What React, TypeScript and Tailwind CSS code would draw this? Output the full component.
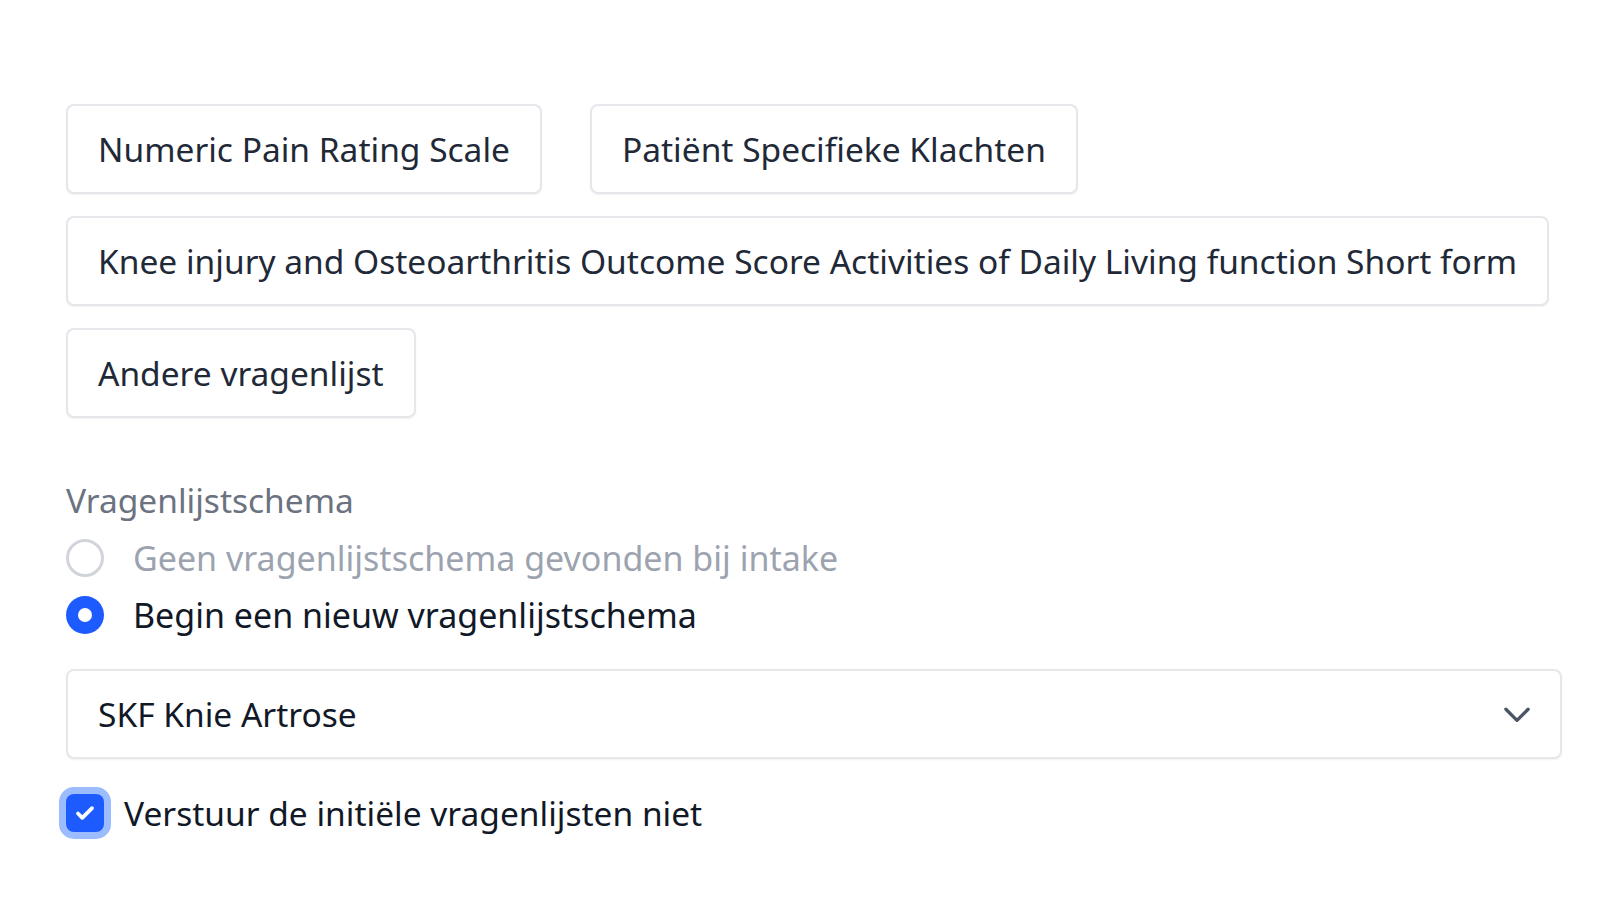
import React from "react";

function Chip({ children }: { children: React.ReactNode }) {
  return (
    <div className="h-[90px] flex items-center px-[30px] bg-white border-2 border-[#e5e7eb] rounded-[8px] shadow-[0_1px_2px_rgba(0,0,0,0.06)] text-[33.5px] text-[#1f2937] whitespace-nowrap">
      {children}
    </div>
  );
}

export default function App() {
  return (
    <div className="w-[1600px] h-[899px] bg-white overflow-hidden" style={{ fontFamily: '"Noto Sans", "Open Sans", sans-serif' }}>
      <div className="pl-[66px] pt-[104px] pr-[38px] flex flex-col">
        <div className="flex flex-col gap-[22px] items-start">
          <div className="flex gap-[48px]">
            <Chip>Numeric Pain Rating Scale</Chip>
            <Chip>Patiënt Specifieke Klachten</Chip>
          </div>
          <Chip>Knee injury and Osteoarthritis Outcome Score Activities of Daily Living function Short form</Chip>
          <Chip>Andere vragenlijst</Chip>
        </div>

        <div className="mt-[59px] text-[33.5px] text-[#6b7280] leading-[46px]">Vragenlijstschema</div>
        <div className="mt-[12px] flex flex-col gap-[11px]">
          <div className="flex items-center gap-[29px] h-[46px]">
            <div className="w-[38px] h-[38px] rounded-full border-[3px] border-[#d1d5db] bg-white" />
            <span className="text-[34px] text-[#9ca3af]">Geen vragenlijstschema gevonden bij intake</span>
          </div>
          <div className="flex items-center gap-[29px] h-[46px]">
            <div className="w-[38px] h-[38px] rounded-full bg-[#1d5bff] flex items-center justify-center">
              <div className="w-[14px] h-[14px] rounded-full bg-white" />
            </div>
            <span className="text-[34px] text-[#111827]">Begin een nieuw vragenlijstschema</span>
          </div>
        </div>

        <div className="mt-[31px] h-[90px] flex items-center justify-between pl-[30px] pr-[24px] bg-white border-2 border-[#e5e7eb] rounded-[8px] shadow-[0_1px_2px_rgba(0,0,0,0.06)]">
          <span className="text-[33.5px] text-[#111827]">SKF Knie Artrose</span>
          <svg width="38" height="38" viewBox="0 0 24 24" fill="none" stroke="#4b5563" strokeWidth="2.1" strokeLinecap="round" strokeLinejoin="round">
            <path d="M5 9l7 7 7-7" />
          </svg>
        </div>

        <div className="mt-[29px] flex items-center gap-[20px] h-[50px]">
          <div className="w-[38px] h-[38px] rounded-[8px] bg-[#1d5bff] flex items-center justify-center shadow-[0_0_0_7px_#9bbcff]">
            <svg width="26" height="26" viewBox="0 0 24 24" fill="none" stroke="white" strokeWidth="3.4" strokeLinecap="round" strokeLinejoin="round">
              <path d="M5.5 12.5l4 4L18.5 7.5" />
            </svg>
          </div>
          <span className="text-[33.5px] text-[#111827]">Verstuur de initiële vragenlijsten niet</span>
        </div>
      </div>
    </div>
  );
}
